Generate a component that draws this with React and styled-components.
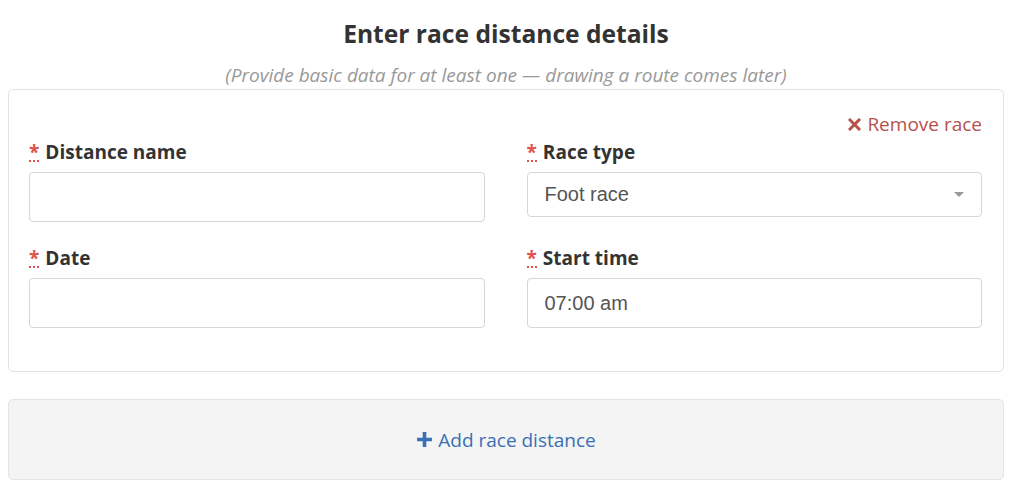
import React, { useState } from 'react';
import styled, { createGlobalStyle } from 'styled-components';

const GlobalStyle = createGlobalStyle`
  html, body {
    margin: 0;
    padding: 0;
    background: #fff;
    font-family: "Open Sans", "Liberation Sans", sans-serif;
    color: #333;
  }
`;

const Page = styled.div`
  width: 996px;
  margin-left: 8px;
  padding-top: 19px;
`;

const Title = styled.h2`
  margin: 0;
  text-align: center;
  font-size: 24.6px;
  line-height: 30px;
  font-weight: 700;
  color: #333;
`;

const Subtitle = styled.p`
  margin: 14px 0 2px;
  text-align: center;
  font-size: 19px;
  line-height: 24px;
  font-style: italic;
  color: #999;
`;

const Card = styled.div`
  border: 1px solid #e3e3e3;
  border-radius: 5px;
  padding: 22px 21px 43px 20px;
`;

const RemoveRow = styled.div`
  display: flex;
  justify-content: flex-end;
`;

const RemoveLink = styled.a`
  display: inline-flex;
  align-items: center;
  gap: 6px;
  font-size: 19px;
  line-height: 24px;
  color: #b5524b;
  cursor: pointer;
  text-decoration: none;
`;

const Grid = styled.div`
  display: grid;
  grid-template-columns: 1fr 1fr;
  column-gap: 42px;
  row-gap: 24px;
  margin-top: 4px;
  align-items: start;
`;

const Field = styled.div`
  display: flex;
  flex-direction: column;
`;

const Label = styled.label`
  display: flex;
  align-items: baseline;
  gap: 6px;
  font-size: 19px;
  line-height: 24px;
  font-weight: 700;
  color: #333;
  margin-bottom: 8px;
`;

const Req = styled.abbr`
  color: #e0524b;
  font-weight: 700;
  text-decoration: none;
  border-bottom: 2px dotted #e0524b;
  line-height: 16px;
`;

const Input = styled.input`
  box-sizing: border-box;
  height: 50px;
  width: 100%;
  border: 1px solid #d6d6d6;
  border-radius: 4px;
  padding: 0 17px;
  font-family: "Liberation Sans", Arial, sans-serif;
  font-size: 20px;
  color: #555;
  background: #fff;
  outline: none;
`;

const SelectBox = styled.div`
  box-sizing: border-box;
  height: 45px;
  border: 1px solid #d6d6d6;
  border-radius: 4px;
  padding: 0 17px;
  display: flex;
  align-items: center;
  justify-content: space-between;
  font-family: "Liberation Sans", Arial, sans-serif;
  font-size: 20px;
  color: #555;
`;

const Caret = styled.span`
  width: 0;
  height: 0;
  border-left: 5px solid transparent;
  border-right: 5px solid transparent;
  border-top: 5px solid #999;
`;

const AddBox = styled.button`
  box-sizing: border-box;
  width: 100%;
  height: 81px;
  margin-top: 27px;
  background: #f4f4f4;
  border: 1px solid #e4e4e4;
  border-radius: 5px;
  display: flex;
  align-items: center;
  justify-content: center;
  gap: 5px;
  font-family: "Open Sans", "Liberation Sans", sans-serif;
  font-size: 19px;
  color: #3a70b5;
  cursor: pointer;
`;

const Times = () => (
  <svg width="13" height="13" viewBox="0 0 13 13">
    <path d="M2 2 L11 11 M11 2 L2 11" stroke="#b5524b" strokeWidth="3" strokeLinecap="square" />
  </svg>
);

const Plus = () => (
  <svg width="17" height="17" viewBox="0 0 16 16">
    <path d="M8 1 V15 M1 8 H15" stroke="#3a70b5" strokeWidth="3.4" />
  </svg>
);

const ReqLabel = ({ children }) => (
  <Label>
    <Req title="required">*</Req>
    {children}
  </Label>
);

const App = () => {
  const [name, setName] = useState('');
  const [date, setDate] = useState('');
  const [time, setTime] = useState('07:00 am');

  return (
    <>
      <GlobalStyle />
      <Page>
        <Title>Enter race distance details</Title>
        <Subtitle>(Provide basic data for at least one — drawing a route comes later)</Subtitle>
        <Card>
          <RemoveRow>
            <RemoveLink>
              <Times />
              Remove race
            </RemoveLink>
          </RemoveRow>
          <Grid>
            <Field>
              <ReqLabel>Distance name</ReqLabel>
              <Input value={name} onChange={(e) => setName(e.target.value)} />
            </Field>
            <Field>
              <ReqLabel>Race type</ReqLabel>
              <SelectBox>
                Foot race
                <Caret />
              </SelectBox>
            </Field>
            <Field>
              <ReqLabel>Date</ReqLabel>
              <Input value={date} onChange={(e) => setDate(e.target.value)} />
            </Field>
            <Field>
              <ReqLabel>Start time</ReqLabel>
              <Input value={time} onChange={(e) => setTime(e.target.value)} />
            </Field>
          </Grid>
        </Card>
        <AddBox type="button">
          <Plus />
          Add race distance
        </AddBox>
      </Page>
    </>
  );
};

export default App;
